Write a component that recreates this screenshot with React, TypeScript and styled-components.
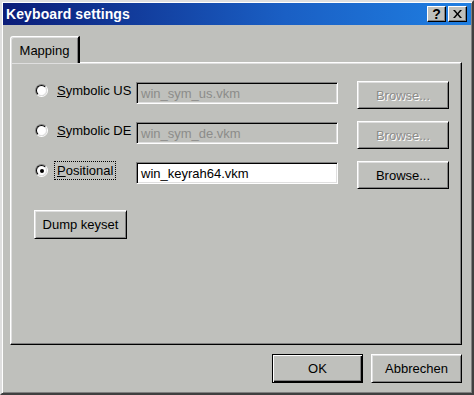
import * as React from "react";
import styled, { createGlobalStyle, css } from "styled-components";

const FACE = "#bfc0bc";

const GlobalStyle = createGlobalStyle`
  html, body {
    margin: 0;
    padding: 0;
    background: ${FACE};
  }
  body {
    font-family: "Liberation Sans", Arial, sans-serif;
    font-size: 13px;
    color: #000;
  }
`;

const Window = styled.div`
  box-sizing: border-box;
  width: 474px;
  height: 395px;
  display: flex;
  flex-direction: column;
  background: ${FACE};
  border: 2px solid;
  border-color: #dfdfdf #404040 #404040 #dfdfdf;
  box-shadow: inset 1px 1px #fff, inset -1px -1px #808080;
  padding: 1px;
`;

const TitleBar = styled.div`
  height: 22px;
  display: flex;
  align-items: center;
  padding: 0 4px 0 3px;
  background: linear-gradient(to right, #0b1d78, #1a5fc4 60%, #1f7fe2);
`;

const Title = styled.span`
  flex: 1;
  color: #fff;
  font-weight: bold;
  font-size: 14px;
  letter-spacing: 0.1px;
`;

const CaptionButtons = styled.div`
  display: flex;
  gap: 2px;
`;

const CaptionButton = styled.div`
  box-sizing: border-box;
  width: 19px;
  height: 16px;
  display: flex;
  align-items: center;
  justify-content: center;
  background: ${FACE};
  border: 1px solid;
  border-color: #fff #000 #000 #fff;
  box-shadow: inset -1px -1px #808080;
  font-weight: bold;
  font-size: 14px;
  line-height: 1;
`;

const Body = styled.div`
  flex: 1;
  display: flex;
  flex-direction: column;
  padding: 11px 9px 0 7px;
`;

const TabStrip = styled.div`
  display: flex;
`;

const Tab = styled.div`
  box-sizing: border-box;
  height: 27px;
  width: 70px;
  margin-bottom: -1px;
  z-index: 1;
  display: flex;
  align-items: center;
  justify-content: center;
  padding-top: 1px;
  background: ${FACE};
  border-style: solid;
  border-width: 1px 2px 0 1px;
  border-color: #fff #000 transparent #fff;
  border-top-left-radius: 3px;
  box-shadow: inset 1px 1px #dfdfdf, inset -1px 0 #808080;
`;

const Panel = styled.div`
  box-sizing: border-box;
  height: 283px;
  display: flex;
  flex-direction: column;
  gap: 12px;
  padding: 18px 0 0 24px;
  border: 1px solid;
  border-color: #fff #000 #000 #fff;
  box-shadow: inset -1px -1px #808080, inset 1px 1px #dfdfdf;
`;

const Row = styled.div`
  display: flex;
  align-items: flex-start;
  height: 28px;
`;

const RadioLabel = styled.label`
  width: 101px;
  display: flex;
  align-items: center;
  gap: 8px;
  margin-top: 0;
`;

const RadioOuter = styled.span`
  box-sizing: border-box;
  width: 13px;
  height: 13px;
  border-radius: 50%;
  border: 1px solid;
  border-color: #808080 #fff #fff #808080;
  display: flex;
`;

const RadioInner = styled.span`
  box-sizing: border-box;
  flex: 1;
  border-radius: 50%;
  border: 1px solid;
  border-color: #000 #dfdfdf #dfdfdf #000;
  background: #fff;
  display: flex;
  align-items: center;
  justify-content: center;
`;

const RadioDot = styled.span`
  width: 4px;
  height: 4px;
  border-radius: 50%;
  background: #000;
`;

const LabelText = styled.span<{ $focused?: boolean }>`
  white-space: nowrap;
  padding: 1px 2px;
  margin-left: -2px;
  border: 1px dotted ${(p) => (p.$focused ? "#000" : "transparent")};
`;

const TextField = styled.div<{ $disabled?: boolean }>`
  box-sizing: border-box;
  width: 202px;
  height: 22px;
  display: flex;
  align-items: center;
  margin-top: 1px;
  padding: 0 2px 0 4px;
  border: 1px solid;
  border-color: #808080 #fff #fff #808080;
  box-shadow: inset 1px 1px #000, inset -1px -1px #dfdfdf;
  background: ${(p) => (p.$disabled ? FACE : "#fff")};
  color: ${(p) => (p.$disabled ? "#8c8c8a" : "#000")};
`;

const buttonBase = css`
  box-sizing: border-box;
  display: flex;
  align-items: center;
  justify-content: center;
  background: ${FACE};
  font-family: inherit;
  font-size: 13px;
  padding: 0;
`;

const Button = styled.div<{ $disabled?: boolean; $width?: number }>`
  ${buttonBase}
  width: ${(p) => (p.$width ? `${p.$width}px` : "auto")};
  height: 29px;
  border: 1px solid;
  border-color: #fff #000 #000 #fff;
  box-shadow: inset 1px 1px #dfdfdf, inset -1px -1px #808080;
  color: ${(p) => (p.$disabled ? "#8c8c8a" : "#000")};
  text-shadow: ${(p) => (p.$disabled ? "1px 1px #fff" : "none")};
`;

const BrowseButton = styled(Button)`
  height: 28px;
  margin-left: 19px;
`;

const DefaultButton = styled.div<{ $width?: number }>`
  ${buttonBase}
  width: ${(p) => (p.$width ? `${p.$width}px` : "auto")};
  height: 29px;
  border: 1px solid #000;
  box-shadow: inset 1px 1px #fff, inset -1px -1px #000, inset -2px -2px #808080;
`;

const DumpRow = styled.div`
  margin-top: 9px;
  margin-left: -1px;
`;

const Footer = styled.div`
  display: flex;
  justify-content: flex-end;
  gap: 8px;
  margin-top: 9px;
`;

const Radio = ({ checked }: { checked?: boolean }) => (
  <RadioOuter>
    <RadioInner>{checked && <RadioDot />}</RadioInner>
  </RadioOuter>
);

const CloseGlyph = () => (
  <svg width="9" height="8" viewBox="0 0 9 8">
    <path d="M0 0h2l2.5 3L7 0h2L5.5 4 9 8H7L4.5 5 2 8H0l3.5-4z" fill="#000" />
  </svg>
);

type Mapping = {
  label: string;
  file: string;
  checked?: boolean;
};

const mappings: Mapping[] = [
  { label: "Symbolic US", file: "win_sym_us.vkm" },
  { label: "Symbolic DE", file: "win_sym_de.vkm" },
  { label: "Positional", file: "win_keyrah64.vkm", checked: true },
];

export default function App() {
  return (
    <>
      <GlobalStyle />
      <Window>
        <TitleBar>
          <Title>Keyboard settings</Title>
          <CaptionButtons>
            <CaptionButton>?</CaptionButton>
            <CaptionButton>
              <CloseGlyph />
            </CaptionButton>
          </CaptionButtons>
        </TitleBar>
        <Body>
          <TabStrip>
            <Tab>Mapping</Tab>
          </TabStrip>
          <Panel>
            {mappings.map((m) => (
              <Row key={m.label}>
                <RadioLabel>
                  <Radio checked={m.checked} />
                  <LabelText $focused={m.checked}>
                    <u>{m.label[0]}</u>
                    {m.label.slice(1)}
                  </LabelText>
                </RadioLabel>
                <TextField $disabled={!m.checked}>{m.file}</TextField>
                <BrowseButton $disabled={!m.checked} $width={92}>
                  Browse...
                </BrowseButton>
              </Row>
            ))}
            <DumpRow>
              <Button $width={93}>Dump keyset</Button>
            </DumpRow>
          </Panel>
          <Footer>
            <DefaultButton $width={91}>OK</DefaultButton>
            <Button $width={91}>Abbrechen</Button>
          </Footer>
        </Body>
      </Window>
    </>
  );
}
